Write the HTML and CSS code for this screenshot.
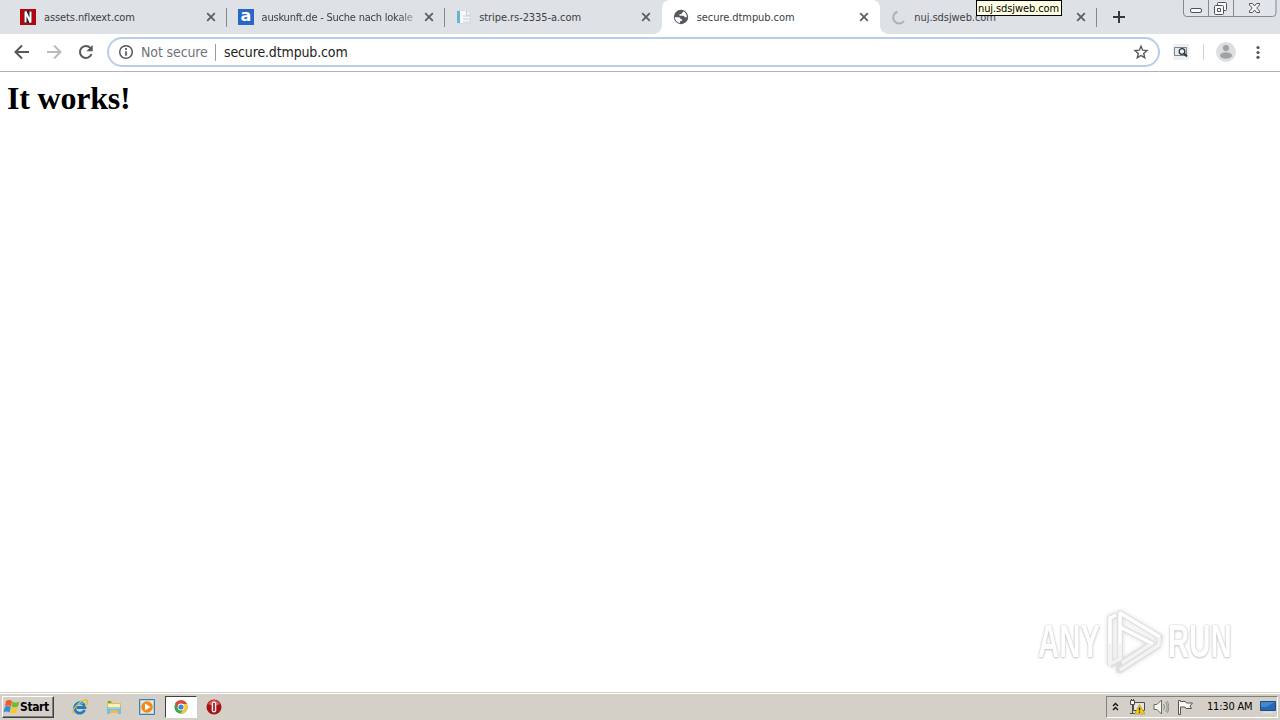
FILE: index.html
```html
<!DOCTYPE html>
<html lang="en">
<head>
<meta charset="utf-8">
<title>secure.dtmpub.com</title>
<link rel="stylesheet" href="styles.css">
</head>
<body>
<div class="desktop">
  <header class="tabstrip">
    <div class="tab">
      <svg class="favicon" viewBox="0 0 16 16"><path fill="#b20710" d="M0 0h16v16H0z"/><path fill="#222" d="M4 2h8v12H4z"/><path d="M5.500 13.500v-11l5 11v-11" fill="none" stroke="#fff" stroke-width="2"/></svg>
      <span class="title t1">assets.nflxext.com</span>
      <svg class="close" viewBox="0 0 10 10"><path d="M1.200 1.200l7.600 7.600M8.800 1.200L1.200 8.800"/></svg>
    </div>
    <div class="tab">
      <span class="favicon letter">a</span>
      <span class="title fade">auskunft.de - Suche nach lokale</span>
      <svg class="close" viewBox="0 0 10 10"><path d="M1.200 1.200l7.600 7.600M8.800 1.200L1.200 8.800"/></svg>
    </div>
    <div class="tab plain">
      <svg class="favicon" viewBox="0 0 16 16"><path fill="#f5f8fa" stroke="#d5dbe1" d="M1.500 1.500h9l4 3v10h-13z"/><path fill="#65b5cf" d="M1 2h3v12H1z"/><path d="M7 7h7M7 10h7M7 13h7M10.500 2v4h4" fill="none" stroke="#c5ced6"/></svg>
      <span class="title">stripe.rs-2335-a.com</span>
      <svg class="close" viewBox="0 0 10 10"><path d="M1.200 1.200l7.600 7.600M8.800 1.200L1.200 8.800"/></svg>
    </div>
    <div class="tab active">
      <svg class="favicon" viewBox="0 0 16 16"><circle cx="8" cy="8" r="7.200" fill="#55585c"/><path d="M1.800 8.300H5.500q2 0 2.200 1.900H9v1.900H7.100v1.900C4 13.700 1.900 11.300 1.800 8.300zM8 2.200h2.200q0 1.500-1.500 1.700v1.300H6.500v1.600h3.800q1.300 0 1.300 1.500h2.300c0-3-1.500-5.300-4-6z" fill="#fff"/></svg>
      <span class="title">secure.dtmpub.com</span>
      <svg class="close" viewBox="0 0 10 10"><path d="M1.200 1.200l7.600 7.600M8.800 1.200L1.200 8.800"/></svg>
    </div>
    <div class="tab">
      <svg class="favicon" viewBox="0 0 16 16"><path d="M6.500 2.700A6 6 0 1 0 13 12" fill="none" stroke="#aeb1b7" stroke-width="2"/></svg>
      <span class="title">nuj.sdsjweb.com</span>
      <svg class="close" viewBox="0 0 10 10"><path d="M1.200 1.200l7.600 7.600M8.800 1.200L1.200 8.800"/></svg>
    </div>
    <svg class="newtab" viewBox="0 0 12 12"><path d="M6 0v12M0 6h12" stroke="#35383d" stroke-width="2"/></svg>
    <svg class="controls" viewBox="0 0 94 17"><path d="M.5-1v14q0 3.500 3 3.500h86q3.500 0 3.500-3.500V-1z" fill="#e1e4e9" stroke="#858990"/><path d="M25.500 0v16M50.500 0v16" stroke="#858990"/><g fill="#f7f8fa" stroke="#50545a"><rect x="7.500" y="8.500" width="11" height="4" rx="1.500"/><rect x="34.500" y="2.500" width="9" height="8" rx="1"/><rect x="31.500" y="5.500" width="9" height="9" rx="1"/><path d="M34.500 8.500h3v3h-3z"/><path d="M66.500 3.500h3l2 2.500 2-2.500h3v1.500L73.700 8l2.800 3v1.500h-3l-2-2.500-2 2.500h-3V11l2.800-3-2.800-3z"/></g></svg>
    <span class="tooltip">nuj.sdsjweb.com</span>
  </header>
  <nav class="toolbar">
    <svg class="nav back" viewBox="0 0 16 16"><path d="M15 8H2M8 1.500L1.500 8 8 14.500"/></svg>
    <svg class="nav forward" viewBox="0 0 16 16"><path d="M1 8h13M8 1.500L14.500 8 8 14.500"/></svg>
    <svg class="nav reload" viewBox="0 0 16 16"><path d="M13.500 10.200A6 6 0 1 1 12.400 3.900"/><path class="solid" d="M14.700 1v6.300H8.400z"/></svg>
    <div class="omnibox">
      <svg class="info" viewBox="0 0 16 16"><circle cx="8" cy="8" r="6.300" fill="none" stroke="#55585c" stroke-width="1.500"/><path d="M8 4v2M8 7.300v4.500" stroke="#55585c" stroke-width="1.700"/></svg>
      <span class="security">Not secure</span>
      <span class="divider"></span>
      <span class="url">secure.dtmpub.com</span>
      <svg class="star" viewBox="0 0 16 16"><path d="M8 2.300l1.700 3.900 4.300.4-3.300 2.900 1 4.200L8 11.500l-3.700 2.200 1-4.200L2 6.600l4.300-.4z" fill="none" stroke="#55585c" stroke-width="1.400"/></svg>
    </div>
    <svg class="extension" viewBox="0 0 16 16"><path fill="#edf0f2" d="M0 0h16v16H0z"/><path d="M1.500 3.500h12v8h-12z" fill="#e3ebee" stroke="#7f8588"/><circle cx="9" cy="7.500" r="2.800" fill="#e8f1f6" stroke="#303338" stroke-width="1.300"/><path d="M11 9.500l3 3" stroke="#303338" stroke-width="2"/></svg>
    <span class="bar"></span>
    <svg class="avatar" viewBox="0 0 20 20"><circle cx="10" cy="10" r="10" fill="#dddee0"/><circle cx="10" cy="6" r="3.100" fill="#a0a2a5"/><ellipse cx="10" cy="13.500" rx="6" ry="3.200" fill="#a0a2a5"/></svg>
    <svg class="menu" viewBox="0 0 4 14"><g fill="#55585c"><circle cx="2" cy="2.500" r="1.600"/><circle cx="2" cy="7.500" r="1.600"/><circle cx="2" cy="12.300" r="1.600"/></g></svg>
  </nav>
  <main class="page">
    <h1>It works!</h1>
    <div class="watermark">
      <span class="any">ANY</span>
      <svg class="play" viewBox="0 0 60 64"><g fill="none" stroke-linejoin="round"><g stroke="#dedede" stroke-width="5.500"><path d="M6 56V9l6-3M16 50V4l40 24-2 9-39 25 1-7M16 18l33 17M6 56l10-5M18 53l29-18"/></g><g stroke="#fff" stroke-width="3.500"><path d="M6 55V9l6-3M16 50V4l40 24M16 18l33 17"/></g><g stroke="#f3f3f3" stroke-width="3.500"><path d="M6 35v20l10-5V35M16 61l39-25V28M18 54l29-19"/></g></g></svg>
      <span class="run">RUN</span>
    </div>
  </main>
  <footer class="taskbar">
    <div class="start"><svg viewBox="0 0 17 16"><path d="M3 2q3-2 6 0L8 7.500q-3-2-6 0z" fill="#ee5b24"/><path d="M9.500 2.500q3 2 7 0l-1.500 5q-3 2-6.500 0z" fill="#77b82d"/><path d="M1.800 8q3-2 6 0l-1.300 5.500q-3-2-6 0z" fill="#388bd8"/><path d="M8.300 8.500q3 2 6.500 0l-1.500 5q-3 2-6 0z" fill="#fbc522"/></svg><span>Start</span></div>
    <div class="launch">
      <svg viewBox="0 0 16 16"><path d="M12.600 11A5.200 5.200 0 1 1 13 8.500H4.500" fill="none" stroke="#207bbf" stroke-width="2.800"/><path d="M2 14.500C-2 12 8 1 14 1c3 0 1 4-1 6" fill="none" stroke="#e6b937" stroke-width="1.300"/><path d="M5 5.500q3-3 6-1" fill="none" stroke="#61c8ef"/></svg>
    </div>
    <div class="launch">
      <svg viewBox="0 0 16 16"><path d="M1 2h5l1 2h8v10H1z" fill="#e6bd55"/><path d="M2 5h12v4H2z" fill="#fff0a5"/><path d="M2 3h3" stroke="#69a94d" stroke-width="2"/><path d="M1 8h14v7h-3v-4H4v4H1z" fill="#79bddc"/><path d="M2 9h12" stroke="#c2e6ee"/></svg>
    </div>
    <div class="launch">
      <svg viewBox="0 0 16 16"><path d="M.5.500h15v15H.5z" fill="#a9d0ed" stroke="#397eb9"/><path d="M2 2h12v12H2z" fill="#f9e8c8"/><circle cx="8" cy="8" r="5.800" fill="#ef8a18"/><path d="M6 4.500v7L11.500 8z" fill="#fff"/></svg>
    </div>
    <div class="launch current">
      <svg viewBox="0 0 16 16"><circle cx="8" cy="8" r="6.700" fill="#40a650"/><path d="M2.200 4.600A6.700 6.700 0 0 1 14 5H8L5 9z" fill="#df4537"/><path d="M8 5h6A6.700 6.700 0 0 1 7.500 14.700L11 9z" fill="#f7c63a"/><circle cx="8" cy="8" r="3.400" fill="#fff"/><circle cx="8" cy="8" r="2.600" fill="#4285d5"/></svg>
    </div>
    <div class="launch">
      <svg viewBox="0 0 16 16"><circle cx="8" cy="8" r="7.500" fill="#a31519"/><path d="M2 5Q8-3 14 5q-6 3-12 0z" fill="#d85a5a"/><rect x="5.700" y="2.500" width="4.600" height="11" rx="2.300" fill="#f5eeee"/><path d="M8 4v8" stroke="#9d1717" stroke-width="1.700"/></svg>
    </div>
    <div class="tray">
      <svg class="chev" viewBox="0 0 7 9"><path d="M1 4l2.500-2.500L6 4M1 8l2.500-2.500L6 8" fill="none" stroke="#111" stroke-width="1.400"/></svg>
      <svg class="network" viewBox="0 0 16 16"><path d="M4.500 3.500h11v8h-11z" fill="#e5e5e1" stroke="#4c4c4a"/><path d="M1.500 1.500h4v4h-4zM2.500 0v2M4.500 0v2M3.500 6v9M1 14.500h6" fill="#f4f4f0" stroke="#4c4c4a"/><path d="M10.500 5.500L16 15H5.500z" fill="#f1cb26" stroke="#b79217" stroke-width=".7"/><path d="M10.500 8.500v3M10.500 12.500v1.200" stroke="#343018" stroke-width="1.400"/></svg>
      <svg class="volume" viewBox="0 0 16 16"><path d="M1 5.500h3L8.500 1v14L4 10.500H1z" fill="#f5f5f2" stroke="#6b6b68"/><path d="M10.500 5q2 3 0 6M12.500 3q3.500 5 0 10M14.500 2q3 6 0 12" fill="none" stroke="#8a8a86"/></svg>
      <svg class="flag" viewBox="0 0 16 16"><path d="M1.500 15.500V1.500h2v1h5l1 1.500h6l-2.500 3 1.500 2.500H9l-1-1.500H3.500v7.500z" fill="#f8f8f5" stroke="#555552"/></svg>
      <span class="clock">11:30 AM</span>
      <svg class="show" viewBox="0 0 16 14"><path d="M.5 1.500h15v9H.5z" fill="#2568b7" stroke="#244c80"/><path d="M1 2h14L6 7H1z" fill="#4586cc"/><path d="M3 12.500h10" stroke="#dae1e5" stroke-width="2"/></svg>
    </div>
  </footer>
</div>
</body>
</html>
```
FILE: styles.css
```css
* { box-sizing: border-box; }
body { margin: 0; font-family: "DejaVu Sans Condensed", "DejaVu Sans", sans-serif; overflow: hidden; }
svg { display: block; flex: none; }
.desktop { width: 1280px; height: 720px; display: flex; flex-direction: column; background: #fff; }
.tabstrip { height: 34px; flex: none; background: #dee1e6; display: flex; padding-left: 9.4px; position: relative; }
.tab { width: 217.6px; height: 34px; flex: none; display: flex; align-items: center; padding: 0 11px; position: relative; }
.tab:not(.active):not(.plain)::after { content: ""; position: absolute; right: 0; top: 8px; width: 1px; height: 19px; background: #85888f; }
.active { background: #fff; border-radius: 8px 8px 0 0; }
.active::before, .active::after { content: ""; position: absolute; bottom: 0; width: 8px; height: 8px; }
.active::before { left: -8px; background: radial-gradient(circle at 0 0, transparent 7.5px, #fff 8px); }
.active::after { right: -8px; background: radial-gradient(circle at 100% 0, transparent 7.5px, #fff 8px); }
.favicon { width: 16px; height: 16px; flex: none; }
.letter { background: #2867c7; color: #fff; font: bold 16px/14px "DejaVu Sans", sans-serif; text-align: center; }
.title { width: 155px; margin-left: 7.6px; padding-top: 1px; font-size: 11px; line-height: 16px; letter-spacing: -.07px; color: #3c4043; white-space: nowrap; flex: none; }
.t1 { letter-spacing: -.1px; }
.fade { letter-spacing: -.22px; -webkit-mask-image: linear-gradient(to right, #000 136px, rgba(0,0,0,.2) 155px); mask-image: linear-gradient(to right, #000 136px, rgba(0,0,0,.2) 155px); }
.close { width: 10px; height: 10px; margin-left: 7px; fill: none; stroke: #5b5e63; stroke-width: 1.8; }
.newtab { width: 12px; height: 12px; margin: 11px 0 0 15.6px; }
.controls { width: 94px; height: 17px; position: absolute; left: 1183px; top: 0; }
.tooltip { position: absolute; left: 976px; top: 0; width: 86px; height: 16px; border: 1px solid #000; background: #ffffe1; color: #000; font-size: 11px; line-height: 16px; letter-spacing: -.1px; padding-left: 1px; white-space: nowrap; }
.toolbar { height: 38px; flex: none; background: #fff; border-bottom: 1px solid #b0b2b4; display: flex; align-items: center; padding: 0 0 1px 14px; }
.nav { width: 16px; height: 16px; fill: none; stroke: #55585c; stroke-width: 2; margin-right: 16px; }
.forward { stroke: #b9bbbd; }
.reload { margin-right: 13px; }
.solid { fill: #55585c; stroke: none; }
.omnibox { width: 1053px; height: 30px; border: 2px solid #b7cdea; border-radius: 15px; display: flex; align-items: center; padding: 0 9px; }
.info { width: 16px; height: 16px; margin-right: 7px; }
.security { width: 74px; font-size: 14px; color: #707377; letter-spacing: -.12px; white-space: nowrap; }
.divider { width: 1px; height: 17px; background: #9b9da0; margin-right: 8px; }
.url { font-size: 14px; color: #222; white-space: nowrap; letter-spacing: -.14px; }
.star { width: 16px; height: 16px; margin-left: auto; }
.extension { width: 16px; height: 16px; margin-left: 13px; }
.bar { width: 1px; height: 16px; background: #cfd1d3; margin: 0 12px 0 14px; }
.avatar { width: 20px; height: 20px; }
.menu { width: 4px; height: 14px; margin-left: 20px; }
.page { flex: 1; position: relative; }
h1 { margin: 0; padding: 8px 7px; font: bold 32px/36px "Liberation Serif", serif; letter-spacing: -.2px; color: #000; }
.watermark { position: absolute; left: 1038px; top: 537px; height: 64px; display: flex; align-items: center; color: #fff; font: bold 46px/54px "Liberation Sans", sans-serif; text-shadow: 0 0 2px #b8b8b8, 0 1px 3px #c8c8c8; }
.any, .run { width: 66px; transform: scaleX(.64); transform-origin: 0 50%; white-space: nowrap; }
.play { width: 60px; height: 64px; margin-right: 4px; filter: drop-shadow(0 0 2px #d8d8d8); }
.taskbar { height: 28px; flex: none; background: #d4d0c8; border-top: 1px solid #d4d0c8; box-shadow: inset 0 1px #fff; display: flex; align-items: center; padding: 0 2px; }
.start { width: 52px; height: 22px; border: 1px solid; border-color: #fff #404040 #404040 #fff; box-shadow: inset -1px -1px #808080; display: flex; align-items: center; font-size: 12px; font-weight: bold; color: #000; margin-right: 10px; letter-spacing: -.4px; }
.start svg { width: 17px; height: 16px; }
.launch { width: 32px; height: 22px; display: flex; align-items: center; justify-content: center; margin-right: 1.5px; }
.launch svg { width: 16px; height: 16px; }
.current { background: #fff; border: 1px solid; border-color: #404040 #fff #fff #404040; }
.tray { width: 172px; height: 22px; margin-left: auto; border: 1px solid; border-color: #808080 #fff #fff #808080; display: flex; align-items: center; padding-left: 5px; }
.chev { width: 7px; height: 9px; margin-right: 10px; }
.network { width: 16px; height: 16px; margin-right: 8px; }
.volume { width: 16px; height: 16px; margin-right: 8px; }
.flag { width: 16px; height: 16px; margin-right: 14px; }
.clock { width: 53px; font-size: 11px; white-space: nowrap; letter-spacing: -.2px; color: #000; }
.show { width: 16px; height: 14px; }
```
